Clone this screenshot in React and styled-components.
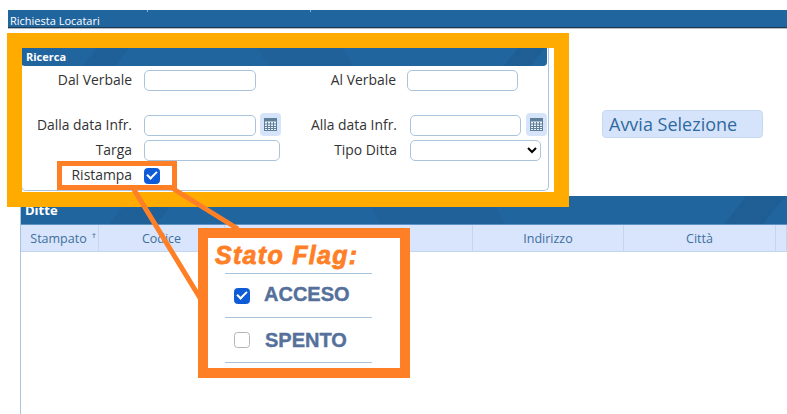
import React from 'react';
import styled, { createGlobalStyle } from 'styled-components';

const GlobalStyle = createGlobalStyle`
  html, body {
    margin: 0;
    padding: 0;
    background: #fff;
  }

  body {
    font-family: "Open Sans", "Liberation Sans", sans-serif;
    color: #333;
  }
`;

const texture = `
  linear-gradient(128deg, transparent 92%, rgba(20, 50, 90, 0.14) 92%, rgba(20, 50, 90, 0.14) 97%, transparent 97%),
  linear-gradient(128deg, transparent 14%, rgba(20, 50, 90, 0.1) 14%, rgba(20, 50, 90, 0.1) 20%, transparent 20%),
  linear-gradient(62deg, transparent 46%, rgba(20, 50, 90, 0.08) 46%, rgba(20, 50, 90, 0.08) 62%, transparent 62%),
  #21659f
`;

const Page = styled.div`
  position: relative;
  width: 787px;
  height: 414px;
  overflow: hidden;
  background: #fff;
`;

const TopBar = styled.div`
  height: 17px;
  margin: 10px 0 0 8px;
  padding-left: 2px;
  background:
    linear-gradient(#8fb3d1, #8fb3d1) 139px 0 / 1px 2px no-repeat,
    linear-gradient(#8fb3d1, #8fb3d1) 302px 0 / 1px 2px no-repeat,
    #21659f;
  border-bottom: 1px solid #1d3a52;
  box-shadow: 0 1px 0 #b5bcc2;
  color: #fff;
  font-size: 11px;
  line-height: 21px;
`;

const SearchArea = styled.div`
  display: flex;
  align-items: flex-start;
  margin: 20px 0 0 21px;
`;

const Panel = styled.section`
  box-sizing: border-box;
  width: 528px;
  height: 143px;
  border: 1px solid #a9c4dc;
  border-top: 0;
  border-radius: 0 0 5px 5px;
`;

const PanelTitle = styled.div`
  height: 18px;
  margin: 0 1px 4px -1px;
  padding-left: 5px;
  border-radius: 0 0 4px 4px;
  background: ${texture};
  color: #fff;
  font-size: 11px;
  font-weight: 700;
  line-height: 17px;
`;

const FormRow = styled.div`
  display: grid;
  grid-template-columns: 264px 1fr;
  height: ${(p) => p.$height || 21}px;
  margin-top: ${(p) => p.$top || 0}px;
`;

const Field = styled.div`
  display: flex;
  align-items: center;
  gap: ${(p) => p.$gap || 12}px;
`;

const Label = styled.label`
  width: ${(p) => p.$width || 110}px;
  margin-top: -2px;
  color: #333;
  font-size: 13.9px;
  text-align: right;
  white-space: nowrap;
`;

const TextInput = styled.input`
  box-sizing: border-box;
  width: ${(p) => p.$width || 112}px;
  height: 21px;
  padding: 0 4px;
  border: 1px solid #a9c4dc;
  border-radius: 5px;
  background: #fff;
`;

const Select = styled.select`
  box-sizing: border-box;
  width: 131px;
  height: 21px;
  border: 1px solid #a9c4dc;
  border-radius: 5px;
  background: #fff;
`;

const CalendarButton = styled.button`
  display: flex;
  align-items: center;
  justify-content: center;
  box-sizing: border-box;
  width: 21px;
  height: 23px;
  margin: -2px 0 0 -8px;
  padding: 0;
  border: 0;
  border-radius: 4px;
  background: #d6e4fb;
`;

const Check = styled.input.attrs({ type: 'checkbox' })`
  position: relative;
  flex: none;
  box-sizing: border-box;
  width: 16px;
  height: 16px;
  margin: 0;
  appearance: none;
  border: 1.5px solid #b4b4b8;
  border-radius: 3.5px;
  background: #fff;

  &:checked {
    border-color: #0d5bd6;
    background: #0d5bd6;
  }

  &:checked::after {
    content: '';
    position: absolute;
    left: 3.5px;
    top: 0.5px;
    width: 4px;
    height: 8px;
    border: solid #fff;
    border-width: 0 2.5px 2.5px 0;
    transform: rotate(45deg);
  }
`;

const StartButton = styled.button`
  box-sizing: border-box;
  width: 161px;
  height: 28px;
  margin: 62px 0 0 53px;
  padding: 0 0 0 6px;
  border: 1px solid #c6d9f2;
  border-radius: 4px;
  background: #d6e4fb;
  color: #2f6a9e;
  font-family: inherit;
  font-size: 18px;
  line-height: 24px;
  text-align: left;
`;

const ResultPanel = styled.section`
  height: 218px;
  margin: 5px 0 0 20px;
  border-left: 1px solid #a9c4dc;
`;

const ResultTitle = styled.div`
  height: 28px;
  padding-left: 4px;
  background: ${texture};
  color: #fff;
  font-size: 13px;
  font-weight: 700;
  line-height: 28px;
`;

const TableHead = styled.div`
  display: grid;
  grid-template-columns: 78px 126px 248px 151px 152px 1fr;
  height: 28px;
  border-top: 1px solid #5c93c4;
  border-bottom: 1px solid #c2d6ee;
  box-sizing: border-box;
  background: #d8e5fc;
`;

const HeadCell = styled.div`
  display: flex;
  align-items: center;
  justify-content: center;
  position: relative;
  border-right: 1px solid #c2d6ee;
  color: #3f6f9c;
  font-size: 12.5px;
`;

const HeadLabel = styled.span`
  margin-right: 2px;
`;

const SortMark = styled.svg`
  position: absolute;
  top: 8px;
  right: 2px;
`;

const Highlight = styled.div`
  position: absolute;
  box-sizing: border-box;
  left: ${(p) => p.$x}px;
  top: ${(p) => p.$y}px;
  width: ${(p) => p.$w}px;
  height: ${(p) => p.$h}px;
  border: ${(p) => p.$border}px solid ${(p) => p.$color};
`;

const Connectors = styled.svg`
  position: absolute;
  left: 0;
  top: 0;
`;

const Legend = styled.aside`
  position: absolute;
  left: 198px;
  top: 228px;
  box-sizing: border-box;
  width: 212px;
  height: 150px;
  padding: 3px 0 0 7px;
  border: 10px solid #ff7f27;
  background: #fff;
`;

const LegendTitle = styled.div`
  height: 32px;
  color: #ff7f27;
  font-family: "Liberation Sans", Arial, sans-serif;
  font-size: 25px;
  font-style: italic;
  font-weight: 700;
  letter-spacing: 1.3px;
  line-height: 29px;
  -webkit-text-stroke: 0.8px #ff7f27;
`;

const LegendList = styled.div`
  width: 147px;
  margin-left: 10px;
  border-top: 1px solid #a9c4dc;
`;

const LegendRow = styled.div`
  display: flex;
  align-items: center;
  gap: ${(p) => p.$gap}px;
  box-sizing: border-box;
  height: ${(p) => p.$height}px;
  padding-left: 9px;
  border-bottom: 1px solid #a9c4dc;
  color: #55709a;
  font-family: "Liberation Sans", Arial, sans-serif;
  font-size: 20px;
  font-weight: 700;
  line-height: 20px;
  -webkit-text-stroke: 0.4px #55709a;
`;

const RowText = styled.span`
  margin-top: ${(p) => p.$lift}px;
`;

const CalendarIcon = () => (
  <svg width="13" height="13" viewBox="0 0 13 13">
    <rect x="0.5" y="0.5" width="12" height="12" fill="#eef3fa" stroke="#5f8098" />
    <rect x="0.5" y="0.5" width="12" height="3" fill="#5f8098" />
    <path d="M1 6h11M1 8.500h11M1 10.500h11M3.500 4v8M6.500 4v8M9.500 4v8" stroke="#5f8098" strokeWidth="1" />
  </svg>
);

export default function App() {
  return (
    <Page>
      <GlobalStyle />
      <TopBar>Richiesta Locatari</TopBar>

      <SearchArea>
        <Panel>
          <PanelTitle>Ricerca</PanelTitle>
          <FormRow>
            <Field>
              <Label>Dal Verbale</Label>
              <TextInput />
            </Field>
            <Field $gap={11}>
              <Label>Al Verbale</Label>
              <TextInput $width={111} />
            </Field>
          </FormRow>
          <FormRow $top={24}>
            <Field>
              <Label>Dalla data Infr.</Label>
              <TextInput />
              <CalendarButton><CalendarIcon /></CalendarButton>
            </Field>
            <Field $gap={13}>
              <Label $width={111}>Alla data Infr.</Label>
              <TextInput $width={111} />
              <CalendarButton><CalendarIcon /></CalendarButton>
            </Field>
          </FormRow>
          <FormRow $top={4}>
            <Field>
              <Label>Targa</Label>
              <TextInput $width={136} />
            </Field>
            <Field $gap={13}>
              <Label $width={111}>Tipo Ditta</Label>
              <Select />
            </Field>
          </FormRow>
          <FormRow $top={6} $height={16}>
            <Field>
              <Label>Ristampa</Label>
              <Check defaultChecked />
            </Field>
          </FormRow>
        </Panel>
        <StartButton>Avvia Selezione</StartButton>
      </SearchArea>

      <ResultPanel>
        <ResultTitle>Ditte</ResultTitle>
        <TableHead>
          <HeadCell>
            <HeadLabel>Stampato</HeadLabel>
            <SortMark width="4" height="5" viewBox="0 0 4 5">
              <path d="M2 0L4 2H2.500V5H1.500V2H0Z" fill="#6f8fb0" />
            </SortMark>
          </HeadCell>
          <HeadCell>Codice</HeadCell>
          <HeadCell />
          <HeadCell>Indirizzo</HeadCell>
          <HeadCell>Città</HeadCell>
          <HeadCell />
        </TableHead>
      </ResultPanel>

      <Highlight $x={7} $y={33} $w={562} $h={174} $border={15} $color="#ffab00" />
      <Connectors width="787" height="414">
        <path d="M133 188L200 298M172 188L238 229" stroke="#ff7f27" strokeWidth="5" fill="none" />
      </Connectors>
      <Highlight $x={57} $y={161} $w={120} $h={29} $border={5} $color="#ff7f27" />

      <Legend>
        <LegendTitle>Stato Flag:</LegendTitle>
        <LegendList>
          <LegendRow $height={44} $gap={14}>
            <Check defaultChecked />
            <RowText $lift={-3}>ACCESO</RowText>
          </LegendRow>
          <LegendRow $height={45} $gap={15}>
            <Check />
            <RowText $lift={-1}>SPENTO</RowText>
          </LegendRow>
        </LegendList>
      </Legend>
    </Page>
  );
}
